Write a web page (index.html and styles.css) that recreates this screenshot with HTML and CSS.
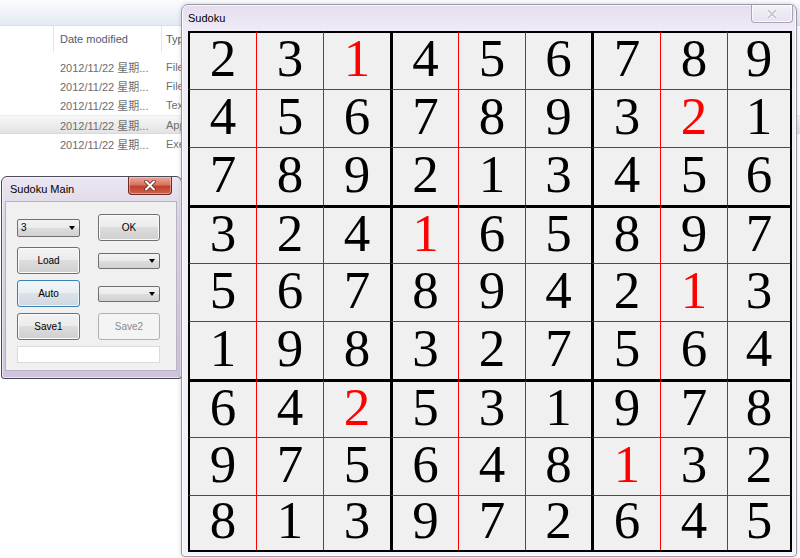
FILE: index.html
```html
<!DOCTYPE html>
<html>
<head>
<meta charset="utf-8">
<link rel="stylesheet" href="styles.css">
</head>
<body>
<div class="explorer">
  <div class="toolbar"></div>
  <div class="header">
    <span class="col col-name"></span>
    <span class="col col-date">Date modified</span>
    <span class="col col-type">Type</span>
  </div>
  <div class="rows">
    <div class="row"><span class="col-name"></span><span class="col-date">2012/11/22 星期...</span><span class="col-type">File folder</span></div>
    <div class="row"><span class="col-name"></span><span class="col-date">2012/11/22 星期...</span><span class="col-type">File folder</span></div>
    <div class="row"><span class="col-name"></span><span class="col-date">2012/11/22 星期...</span><span class="col-type">Text Document</span></div>
    <div class="row hot"><span class="col-name"></span><span class="col-date">2012/11/22 星期...</span><span class="col-type">Application</span></div>
    <div class="row"><span class="col-name"></span><span class="col-date">2012/11/22 星期...</span><span class="col-type">Exe File</span></div>
  </div>
</div>

<div class="main-win">
  <div class="main-title">Sudoku Main</div>
  <div class="close-red">
    <svg width="14" height="11" viewBox="0 0 14 11"><path d="M3 1.5 L11 9.5 M11 1.5 L3 9.5" stroke="#6a2a22" stroke-width="3.6" stroke-linecap="round" fill="none"/><path d="M3 1.5 L11 9.5 M11 1.5 L3 9.5" stroke="#ffffff" stroke-width="2" stroke-linecap="round" fill="none"/></svg>
  </div>
  <div class="panel">
    <div class="controls">
      <div class="combo tall"><span>3</span><i class="arrow"></i></div>
      <div class="btn">OK</div>
      <div class="btn">Load</div>
      <div class="combo"><span></span><i class="arrow"></i></div>
      <div class="btn focus">Auto</div>
      <div class="combo"><span></span><i class="arrow"></i></div>
      <div class="btn">Save1</div>
      <div class="btn disabled">Save2</div>
    </div>
    <div class="textbox"></div>
  </div>
</div>

<div class="sudoku-win">
  <div class="win-title">Sudoku</div>
  <div class="close-pale">
    <svg width="14" height="10" viewBox="0 0 14 10"><path d="M3 1 L11 9 M11 1 L3 9" stroke="#ffffff" stroke-width="3.4" fill="none"/><path d="M3 1 L11 9 M11 1 L3 9" stroke="#c9c4d2" stroke-width="1.8" fill="none"/></svg>
  </div>
  <div class="board">
    <div class="cell">2</div><div class="cell">3</div><div class="cell r">1</div><div class="cell">4</div><div class="cell">5</div><div class="cell">6</div><div class="cell">7</div><div class="cell">8</div><div class="cell">9</div>
    <div class="cell">4</div><div class="cell">5</div><div class="cell">6</div><div class="cell">7</div><div class="cell">8</div><div class="cell">9</div><div class="cell">3</div><div class="cell r">2</div><div class="cell">1</div>
    <div class="cell">7</div><div class="cell">8</div><div class="cell">9</div><div class="cell">2</div><div class="cell">1</div><div class="cell">3</div><div class="cell">4</div><div class="cell">5</div><div class="cell">6</div>
    <div class="cell">3</div><div class="cell">2</div><div class="cell">4</div><div class="cell r">1</div><div class="cell">6</div><div class="cell">5</div><div class="cell">8</div><div class="cell">9</div><div class="cell">7</div>
    <div class="cell">5</div><div class="cell">6</div><div class="cell">7</div><div class="cell">8</div><div class="cell">9</div><div class="cell">4</div><div class="cell">2</div><div class="cell r">1</div><div class="cell">3</div>
    <div class="cell">1</div><div class="cell">9</div><div class="cell">8</div><div class="cell">3</div><div class="cell">2</div><div class="cell">7</div><div class="cell">5</div><div class="cell">6</div><div class="cell">4</div>
    <div class="cell">6</div><div class="cell">4</div><div class="cell r">2</div><div class="cell">5</div><div class="cell">3</div><div class="cell">1</div><div class="cell">9</div><div class="cell">7</div><div class="cell">8</div>
    <div class="cell">9</div><div class="cell">7</div><div class="cell">5</div><div class="cell">6</div><div class="cell">4</div><div class="cell">8</div><div class="cell r">1</div><div class="cell">3</div><div class="cell">2</div>
    <div class="cell">8</div><div class="cell">1</div><div class="cell">3</div><div class="cell">9</div><div class="cell">7</div><div class="cell">2</div><div class="cell">6</div><div class="cell">4</div><div class="cell">5</div>
  </div>
</div>
</body>
</html>
```

FILE: styles.css
```css
* { box-sizing: border-box; }
html, body { margin: 0; padding: 0; }
body {
  width: 800px;
  height: 558px;
  overflow: hidden;
  position: relative;
  background: #ffffff;
  font-family: "Liberation Sans", "Noto Sans CJK SC", sans-serif;
}

/* background explorer */
.explorer { display: flex; flex-direction: column; }
.toolbar {
  height: 26px;
  background: linear-gradient(#fbfcfe, #e3eaf3);
  border-bottom: 1px solid #d6dfea;
}
.header {
  height: 26px;
  display: flex;
  font-size: 11px;
  color: #4c5d74;
}
.header .col {
  display: flex;
  align-items: center;
  border-right: 1px solid #e2e7ee;
}
.header .col-type { border-right: none; }
.col-name { width: 54px; flex: none; }
.col-date { width: 108px; flex: none; padding-left: 6px; white-space: nowrap; }
.col-type {
  flex: none;
  width: 19px;
  padding-left: 4px;
  white-space: nowrap;
  overflow: hidden;
}
.rows { padding-top: 5px; }
.row {
  height: 19.33px;
  display: flex;
  align-items: center;
  font-size: 11px;
  color: #6d6d6d;
}
.row.hot {
  background: linear-gradient(#f7f7f7, #e3e3e3);
  border-top: 1px solid #ececec;
  border-bottom: 1px solid #d9d9d9;
}

/* Sudoku Main window */
.main-win {
  position: absolute;
  left: 1px;
  top: 176px;
  width: 181px;
  height: 203px;
  border: 1px solid #4b4858;
  border-radius: 6px 6px 3px 3px;
  background: linear-gradient(#ebe7f0 0px, #ddd5e6 40px, #cfc4dc 100%);
  box-shadow: inset 0 0 0 1px rgba(255,255,255,0.55);
  padding: 0 4px 7px 3px;
  display: flex;
  flex-direction: column;
}
.main-title {
  height: 24px;
  padding-left: 5px;
  display: flex;
  align-items: center;
  font-size: 11px;
  color: #000;
}
.close-red {
  position: absolute;
  left: 126px;
  top: 0;
  width: 44px;
  height: 18px;
  border: 1px solid #6e2d25;
  border-top: none;
  border-radius: 0 0 4px 4px;
  background: linear-gradient(#eaa99c 0%, #d87462 45%, #c23f2b 55%, #d0634c 100%);
  box-shadow: inset 0 0 0 1px rgba(255,220,210,0.45);
  display: flex;
  align-items: center;
  justify-content: center;
}
.panel {
  flex: 1;
  border: 1px solid #b9b2c4;
  background: #f0f0f0;
  padding: 12px 0 0 11px;
  display: flex;
  flex-direction: column;
}
.controls {
  display: grid;
  grid-template-columns: 63px 62px;
  grid-template-rows: repeat(4, 27px);
  column-gap: 18px;
  row-gap: 6px;
}
.btn {
  border: 1px solid #707070;
  border-radius: 3px;
  background: linear-gradient(#f3f3f3 0%, #ebebeb 50%, #dddddd 50%, #cfcfcf 100%);
  box-shadow: inset 0 0 0 1px #fbfbfb;
  display: flex;
  align-items: center;
  justify-content: center;
  font-size: 10px;
  color: #000;
}
.btn.focus {
  border-color: #3c7fb1;
  background: linear-gradient(#f3f6f9 0%, #eaeef2 50%, #dce2e8 50%, #d0d7de 100%);
  box-shadow: inset 0 0 0 1px #e8f6fd;
}
.btn.disabled {
  border-color: #adb2b5;
  background: #f4f4f4;
  box-shadow: none;
  color: #8a8a8a;
}
.combo {
  height: 16px;
  align-self: center;
  border: 1px solid #707070;
  border-radius: 2px;
  background: linear-gradient(#f3f3f3 0%, #ebebeb 50%, #dddddd 50%, #d2d2d2 100%);
  display: flex;
  align-items: center;
  justify-content: space-between;
  padding: 0 4px 0 3px;
  font-size: 10px;
}
.combo.tall { height: 18px; }
.arrow {
  width: 0;
  height: 0;
  border-left: 3.5px solid transparent;
  border-right: 3.5px solid transparent;
  border-top: 4px solid #000;
}
.textbox {
  margin-top: 6px;
  width: 143px;
  height: 17px;
  border: 1px solid #dadada;
  background: #ffffff;
}

/* Sudoku window */
.sudoku-win {
  position: absolute;
  left: 181px;
  top: 4px;
  width: 616px;
  height: 553px;
  border: 1px solid #9a96a2;
  border-radius: 7px 7px 4px 4px;
  background: linear-gradient(#e4ddef 0px, #efebf6 26px, #f5f2f9 100%);
  box-shadow: inset 0 0 0 1px rgba(255,255,255,0.8), 0 0 4px rgba(80,80,100,0.25);
  padding: 0 4px 4px 6px;
  display: flex;
  flex-direction: column;
}
.win-title {
  height: 26px;
  display: flex;
  align-items: center;
  font-size: 11px;
  color: #000;
}
.close-pale {
  position: absolute;
  right: 3px;
  top: 0;
  width: 42px;
  height: 18px;
  border: 1px solid #aaa5b4;
  border-top: none;
  border-radius: 0 0 4px 4px;
  background: linear-gradient(#f4f1f8, #e7e2ee);
  box-shadow: inset 0 0 0 1px rgba(255,255,255,0.7);
  display: flex;
  align-items: center;
  justify-content: center;
}
.board {
  display: grid;
  grid-template-columns: 68px 67px 67px 68px 67px 66px 69px 67px 63px;
  grid-template-rows: repeat(8, 58px) 55px;
  width: 604px;
  height: 521px;
  border-right: 2px solid #000;
  border-bottom: 2px solid #000;
  background: #f0f0f0;
}
.cell {
  border-left: 1px solid #ff0000;
  border-top: 1px solid #ff0000;
  display: flex;
  align-items: center;
  justify-content: center;
  padding-bottom: 5px;
  font-family: "Liberation Serif", serif;
  font-size: 53px;
  line-height: 1;
  color: #000;
}
.cell:nth-child(9n+1) { border-left: 2px solid #000; }
.cell:nth-child(9n+4),
.cell:nth-child(9n+7) { border-left: 3px solid #000; }
.cell:nth-child(-n+9) { border-top: 2px solid #000; }
.cell:nth-child(n+28):nth-child(-n+36),
.cell:nth-child(n+55):nth-child(-n+63) { border-top: 3px solid #000; }
.cell.r { color: #ff0000; }
```
